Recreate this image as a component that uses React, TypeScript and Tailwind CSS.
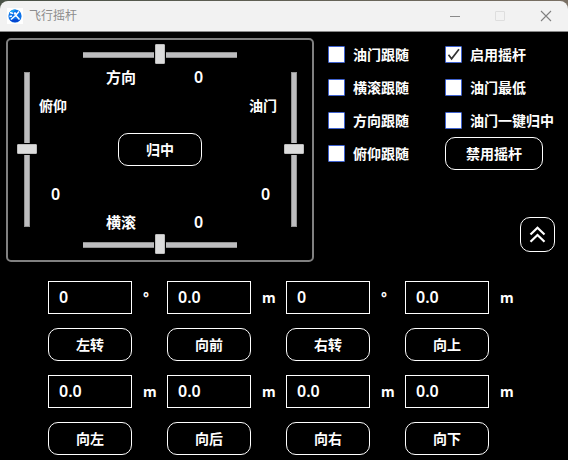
import React from "react";
import clsx from "clsx";

type SliderProps = { vertical?: boolean };
type CheckProps = { label: string, checked?: boolean };
type Move = { value: string, unit: string, label: string };

const moves: Move[][] = [
  [
    { value: "0", unit: "°", label: "左转" },
    { value: "0.0", unit: "m", label: "向前" },
    { value: "0", unit: "°", label: "右转" },
    { value: "0.0", unit: "m", label: "向上" },
  ],
  [
    { value: "0.0", unit: "m", label: "向左" },
    { value: "0.0", unit: "m", label: "向后" },
    { value: "0.0", unit: "m", label: "向右" },
    { value: "0.0", unit: "m", label: "向下" },
  ],
];

const Logo = () => (
  <svg width="16" height="16" viewBox="0 0 16 16" className="bg-white">
    <circle cx="8" cy="8" r="6.6" fill="#0b72ea" />
    <path d="M2 5.5A6.6 6.6 0 0 1 9 1.5L6 4Z" fill="#19a5f5" />
    <path d="M3 12A6.6 6.6 0 0 0 13 12L9 11Z" fill="#0645cf" />
    <path d="M3 4.5 6 5.5M12 3.5 8.5 7.5 4 11.5M9 7.5 12.5 11.5M2.5 8.5 5 8" fill="none" stroke="#fff" strokeWidth="1.5" />
    <circle cx="8" cy="5.5" r="1.3" fill="#fff" />
  </svg>
);

const TitleBar = () => (
  <div className="h-8 pt-px bg-linear-to-r from-[#4a5247] to-[#7a7064]">
    <div className="h-[31px] flex items-center rounded-t-lg bg-[#f2f2f2] border-b border-[#888] pl-[7px]">
      <Logo />
      <span className="ml-1.5 mb-px text-xs leading-4 text-[#8c8c8c]">飞行摇杆</span>
      <svg width="104" height="12" viewBox="0 0 104 12" className="ml-auto mr-4 mb-px" fill="none">
        <path d="M2 6.5H12" stroke="#8a8a8a" />
        <rect x="47.5" y="1.5" width="9" height="9" rx="0.5" stroke="#dedede" />
        <path d="M93 1 103 11M103 1 93 11" stroke="#808080" strokeWidth="1.1" />
      </svg>
    </div>
  </div>
);

const Slider = ({ vertical }: SliderProps) => (
  <div className={clsx("flex items-center shrink-0", vertical ? "w-5 h-[155px] flex-col" : "h-5 w-[154px]")}>
    <div className={clsx("bg-[#bdbdbf] border-[#929292]", vertical ? "w-1.5 h-[71px] border-x border-t" : "h-1.5 w-[71px] mt-0.5 border-y")} />
    <div className={clsx("bg-[#dcdcdc] rounded-[1px] border border-[#bcbcbc] shrink-0", vertical ? "w-5 h-2.5 my-px" : "w-2.5 h-5 mx-px")} />
    <div className={clsx("flex-1 bg-[#bdbdbf] border-[#929292]", vertical ? "w-1.5 border-x border-b" : "h-1.5 mt-0.5 border-y")} />
  </div>
);

const Check = ({ label, checked }: CheckProps) => (
  <div className="h-[33px] flex items-center whitespace-nowrap">
    <span className="size-[17px] bg-white border border-[#3f62cf] rounded-[1px] shrink-0">
      {checked && (
        <svg width="15" height="15" viewBox="0 0 15 15" fill="none">
          <path d="M2.5 7.8 5.6 11.8 13 2.2" stroke="#333" strokeWidth="1.7" />
        </svg>
      )}
    </span>
    <span className="ml-2">{label}</span>
  </div>
);

const Button = ({ children, className }: { children: React.ReactNode, className?: string }) => (
  <button className={clsx("h-[33px] flex items-center justify-center border border-white rounded-[10px]", className)}>
    {children}
  </button>
);

const AxisPanel = () => (
  <div className="w-[308px] h-56 flex border-2 border-[#808080] rounded-[5px]">
    <div className="w-[75px] flex pt-8 pl-[9px]">
      <Slider vertical />
      <div className="w-11 flex flex-col pt-6 pl-0.5">
        <span className="leading-5">俯仰</span>
        <span className="mt-[68px] pl-3 text-base leading-5 font-semibold">0</span>
      </div>
    </div>
    <div className="w-[154px] flex flex-col pt-1">
      <Slider />
      <div className="flex items-center pl-[23px] pt-[3px] text-[15px] leading-5">
        <span className="w-[88px]">方向</span>
        <span className="text-base leading-5 font-semibold">0</span>
      </div>
      <Button className="w-[84px] ml-[35px] mt-[46px]">归中</Button>
      <div className="flex items-center pl-[23px] mt-[46px] text-[15px] leading-5">
        <span className="w-[88px]">横滚</span>
        <span className="text-base leading-5 font-semibold">0</span>
      </div>
      <div className="mt-0.5">
        <Slider />
      </div>
    </div>
    <div className="w-[75px] flex pt-8 pl-3">
      <div className="w-[35px] flex flex-col pt-6">
        <span className="leading-5 whitespace-nowrap">油门</span>
        <span className="mt-[68px] pl-3 text-base leading-5 font-semibold">0</span>
      </div>
      <Slider vertical />
    </div>
  </div>
);

const MoveControl = ({ value, unit, label }: Move) => (
  <div className="w-[119px]">
    <div className="flex items-center">
      <div className="w-[84px] h-[33px] flex items-center border border-white pl-2.5 pb-0.5 text-base font-semibold">{value}</div>
      <span className="ml-[11px] text-sm">{unit}</span>
    </div>
    <Button className="w-[84px] mt-3.5">{label}</Button>
  </div>
);

export default function App() {
  return (
    <div className="w-[568px] h-[460px] overflow-hidden bg-black text-white text-sm font-['Noto_Sans','Noto_Sans_CJK_SC',sans-serif]">
      <TitleBar />
      <div className="font-bold">
        <div className="flex pl-1.5 pt-1.5">
          <AxisPanel />
          <div className="flex-1 flex flex-col pl-3.5">
            <div className="flex">
              <div className="w-[117px]">
                <Check label="油门跟随" />
                <Check label="横滚跟随" />
                <Check label="方向跟随" />
                <Check label="俯仰跟随" />
              </div>
              <div>
                <Check label="启用摇杆" checked />
                <Check label="油门最低" />
                <Check label="油门一键归中" />
                <Button className="w-[98px]">禁用摇杆</Button>
              </div>
            </div>
            <button className="size-[35px] ml-48 mt-[47px] flex items-center justify-center border border-white rounded-[10px]">
              <svg width="17" height="17" viewBox="0 0 17 17" fill="none" stroke="#fff" strokeWidth="2.2">
                <path d="M1.5 8.5 8.5 1.8 15.5 8.5M1.5 15.8 8.5 9 15.5 15.8" />
              </svg>
            </button>
          </div>
        </div>
        <div className="flex flex-col gap-3.5 pl-12 pt-[19px]">
          {moves.map((row, i) => (
            <div key={i} className="flex">
              {row.map((m) => <MoveControl key={m.label} {...m} />)}
            </div>
          ))}
        </div>
      </div>
    </div>
  );
}
